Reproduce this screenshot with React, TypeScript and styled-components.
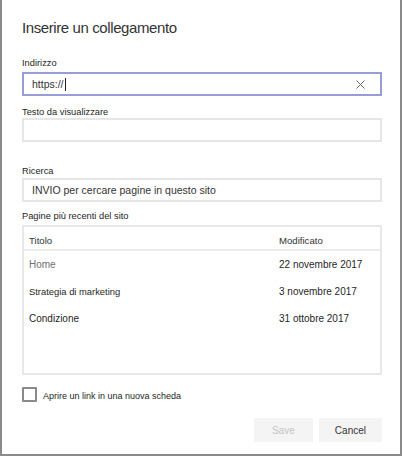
import styled, { createGlobalStyle } from "styled-components";

type PageRow = {
  title: string;
  modified: string;
  muted?: boolean;
  small?: boolean;
};

const recentPages: PageRow[] = [
  { title: "Home", modified: "22 novembre 2017", muted: true },
  { title: "Strategia di marketing", modified: "3 novembre 2017", small: true },
  { title: "Condizione", modified: "31 ottobre 2017" },
];

const GlobalStyle = createGlobalStyle`
  html, body {
    margin: 0;
    padding: 0;
    background: #ffffff;
  }

  body {
    font-family: "Liberation Sans", Arial, sans-serif;
    color: #252525;
  }
`;

const Dialog = styled.div`
  box-sizing: border-box;
  width: 402px;
  height: 456px;
  padding: 18px 18px 0 20px;
  border: 2px solid #8a8a8a;
  border-top: none;
  background: #ffffff;
  display: flex;
  flex-direction: column;
`;

const Title = styled.h1`
  margin: 0;
  font-size: 15px;
  line-height: 20px;
  font-weight: normal;
  letter-spacing: -0.4px;
  color: #333333;
`;

const Label = styled.div<{ $top: number; $gap: number }>`
  margin-top: ${(p) => p.$top}px;
  margin-bottom: ${(p) => p.$gap}px;
  font-size: 9.3px;
  line-height: 12px;
  color: #252525;
`;

const Field = styled.div<{ $focused?: boolean }>`
  box-sizing: border-box;
  height: 24px;
  padding: 0 8px;
  border: 2px solid ${(p) => (p.$focused ? "#989dd8" : "#e6e6e6")};
  display: flex;
  align-items: center;
  font-size: 10.5px;
  color: #333333;
`;

const Caret = styled.span`
  width: 1px;
  height: 13px;
  margin-left: 1px;
  background: #222222;
`;

const ClearButton = styled.span`
  margin-left: auto;
  margin-right: 7px;
  display: flex;
  align-items: center;
  color: #6a6a6a;
`;

const Table = styled.div`
  box-sizing: border-box;
  height: 150px;
  border: 2px solid #e8e8e8;
`;

const HeaderRow = styled.div`
  box-sizing: border-box;
  height: 24px;
  padding: 8px 5px 0;
  display: grid;
  grid-template-columns: 250px 1fr;
  border-bottom: 2px solid #ededed;
  font-size: 9.6px;
  line-height: 12px;
  color: #333333;
`;

const Row = styled.div`
  padding: 0 5px;
  display: grid;
  grid-template-columns: 250px 1fr;
  line-height: 27px;
  font-size: 10px;
  color: #1f1f1f;
`;

const PageTitle = styled.span<{ $muted?: boolean; $small?: boolean }>`
  color: ${(p) => (p.$muted ? "#707070" : "#1f1f1f")};
  font-size: ${(p) => (p.$small ? "9.4px" : "10px")};
`;

const CheckRow = styled.label`
  margin-top: 12px;
  display: flex;
  align-items: flex-start;
  gap: 6px;
  font-size: 9px;
  line-height: 15px;
  color: #252525;
`;

const CheckBox = styled.span`
  box-sizing: border-box;
  width: 15px;
  height: 15px;
  border: 2px solid #8a8a8a;
  border-radius: 1px;
  background: #ffffff;
`;

const CheckText = styled.span`
  padding-top: 2px;
`;

const Actions = styled.div`
  margin-top: 14px;
  display: flex;
  justify-content: flex-end;
  gap: 6px;
`;

const Button = styled.button<{ $disabled?: boolean }>`
  box-sizing: border-box;
  height: 24px;
  min-width: 59px;
  padding: 0 16px;
  border: none;
  background: #f4f4f4;
  font-family: "Liberation Sans", Arial, sans-serif;
  font-size: 10px;
  color: ${(p) => (p.$disabled ? "#c4c4c4" : "#333333")};
`;

const CloseIcon = () => (
  <svg width="9" height="9" viewBox="0 0 9 9" fill="none">
    <path d="M0.5 0.5 L8.5 8.5 M8.5 0.5 L0.5 8.5" stroke="currentColor" strokeWidth="1" />
  </svg>
);

export default function App() {
  return (
    <>
      <GlobalStyle />
      <Dialog>
        <Title>Inserire un collegamento</Title>

        <Label $top={19} $gap={3}>Indirizzo</Label>
        <Field $focused>
          https://
          <Caret />
          <ClearButton>
            <CloseIcon />
          </ClearButton>
        </Field>

        <Label $top={10} $gap={0}>Testo da visualizzare</Label>
        <Field />

        <Label $top={23} $gap={1}>Ricerca</Label>
        <Field>INVIO per cercare pagine in questo sito</Field>

        <Label $top={8} $gap={3}>Pagine più recenti del sito</Label>
        <Table>
          <HeaderRow>
            <span>Titolo</span>
            <span>Modificato</span>
          </HeaderRow>
          {recentPages.map((page) => (
            <Row key={page.title}>
              <PageTitle $muted={page.muted} $small={page.small}>
                {page.title}
              </PageTitle>
              <span>{page.modified}</span>
            </Row>
          ))}
        </Table>

        <CheckRow>
          <CheckBox />
          <CheckText>Aprire un link in una nuova scheda</CheckText>
        </CheckRow>

        <Actions>
          <Button $disabled>Save</Button>
          <Button>Cancel</Button>
        </Actions>
      </Dialog>
    </>
  );
}
